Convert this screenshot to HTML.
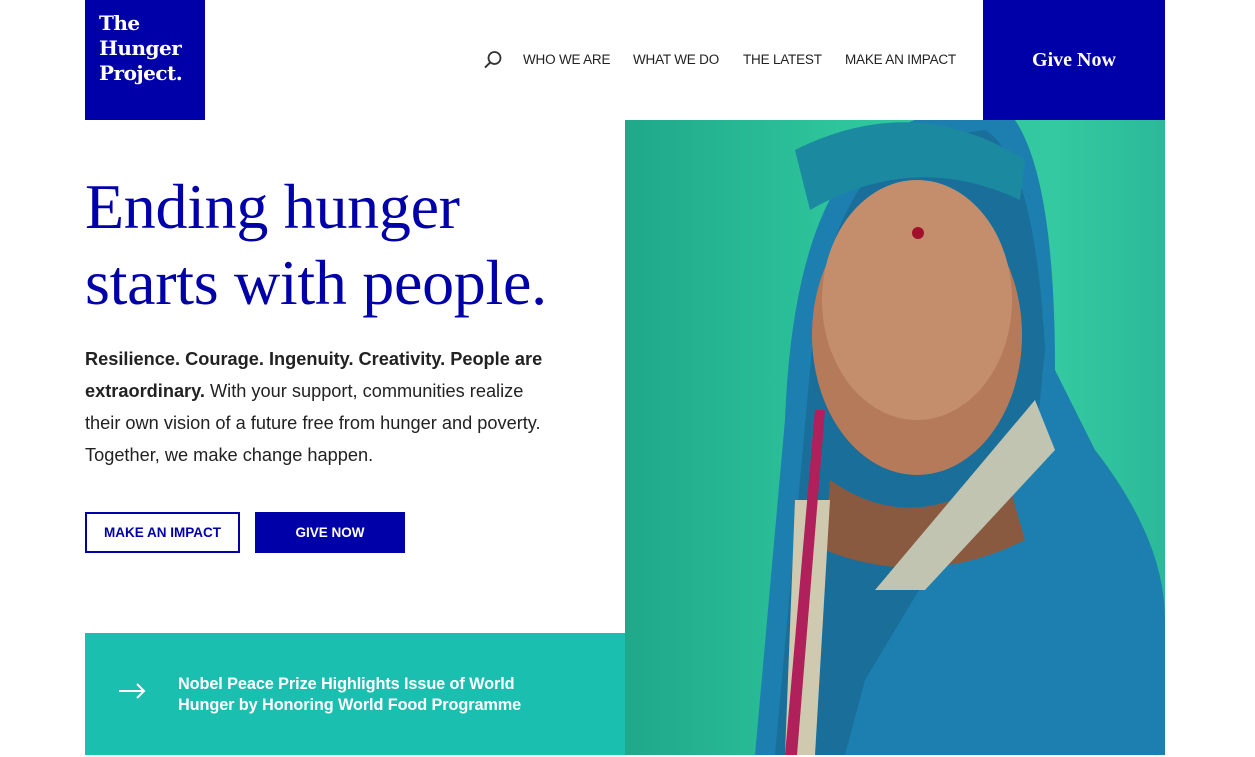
<!DOCTYPE html>
<html><head><meta charset="utf-8"><style>
*{margin:0;padding:0;box-sizing:border-box}
body{width:1255px;height:757px;background:#fff;position:relative;overflow:hidden;font-family:"Liberation Sans",sans-serif}
.logo{position:absolute;left:85px;top:0;width:120px;height:120px;background:#0000a8;color:#fff;font-family:"DejaVu Serif","Liberation Serif",serif;font-weight:bold;font-size:20px;line-height:25px;padding:11px 0 0 14px;letter-spacing:-0.5px}
.nav{position:absolute;top:52px;font-size:13.5px;color:#222;letter-spacing:-0.2px}
.give{position:absolute;left:983px;top:0;width:182px;height:120px;background:#0000a8;color:#fff;font-family:"Liberation Serif",serif;font-weight:bold;font-size:20px;text-align:center;line-height:121px}
h1{position:absolute;left:85px;top:169px;font-family:"Liberation Serif",serif;font-weight:normal;color:#0000a8;font-size:64px;line-height:76px;letter-spacing:-0.3px}
.p{position:absolute;left:85px;top:343px;width:520px;font-size:18.2px;line-height:32px;color:#222;white-space:nowrap}
.b1{position:absolute;left:85px;top:512px;width:155px;height:41px;border:2px solid #0000a8;color:#0000a8;font-weight:bold;font-size:13.5px;text-align:center;line-height:37px}
.b2{position:absolute;left:255px;top:512px;width:150px;height:41px;background:#0000a8;color:#fff;font-weight:bold;font-size:13.5px;text-align:center;line-height:41px}
.news{position:absolute;left:85px;top:633px;width:540px;height:122px;background:#1abfb0;color:#fff}
.news .t{position:absolute;left:93px;top:41px;font-size:16.3px;line-height:21px;font-weight:bold;letter-spacing:-0.1px}
.photo{position:absolute;left:625px;top:120px;width:540px;height:635px;overflow:hidden;background:linear-gradient(90deg,#1fa88a,#2ec59c 40%,#34c9a0 80%,#2bb99a)}
</style></head><body>
<div class="logo">The<br>Hunger<br>Project.</div>
<svg style="position:absolute;left:483px;top:50px" width="20" height="20" viewBox="0 0 20 20"><circle cx="11.5" cy="8" r="6" fill="none" stroke="#333" stroke-width="1.8"/><line x1="7.3" y1="12.3" x2="2" y2="17.6" stroke="#333" stroke-width="2"/></svg>
<div class="nav" style="left:523px">WHO WE ARE</div>
<div class="nav" style="left:633px">WHAT WE DO</div>
<div class="nav" style="left:743px">THE LATEST</div>
<div class="nav" style="left:845px">MAKE AN IMPACT</div>
<div class="give">Give Now</div>
<h1>Ending hunger<br>starts with people.</h1>
<div class="p"><b>Resilience. Courage. Ingenuity. Creativity. People are</b><br><b>extraordinary.</b> With your support, communities realize<br>their own vision of a future free from hunger and poverty.<br>Together, we make change happen.</div>
<div class="b1">MAKE AN IMPACT</div>
<div class="b2">GIVE NOW</div>
<div class="news"><svg style="position:absolute;left:33px;top:50px" width="28" height="16" viewBox="0 0 28 16"><path d="M1 8H26M19 1l7 7-7 7" fill="none" stroke="#fff" stroke-width="2"/></svg><div class="t">Nobel Peace Prize Highlights Issue of World<br>Hunger by Honoring World Food Programme</div></div>
<div class="photo">
<svg width="540" height="635" viewBox="0 0 540 635">
<path d="M130 635 L160 300 Q170 40 290 0 L390 0 Q430 60 430 250 L470 330 Q540 420 540 500 L540 635Z" fill="#1d7fb0"/>
<path d="M150 635 L185 250 Q200 60 290 20 L360 10 Q410 40 420 230 L410 330 L300 460 L240 560 L220 635Z" fill="#1a6e9a"/>
<ellipse cx="292" cy="215" rx="105" ry="140" fill="#b57a5a"/>
<ellipse cx="292" cy="180" rx="95" ry="120" fill="#c48e6c"/>
<path d="M205 360 Q290 420 380 350 L400 420 Q300 470 200 430Z" fill="#8a5a40"/>
<path d="M170 380 L160 635 L190 635 L205 380Z" fill="#cfc9b0"/>
<path d="M410 280 L430 330 L300 470 L250 470Z" fill="#c0c4b0"/>
<path d="M190 290 L160 635 L172 635 L200 290Z" fill="#b0205a"/>
<circle cx="293" cy="113" r="6" fill="#a0102a"/>
<path d="M170 30 Q290 -30 400 40 L395 80 Q290 30 185 90Z" fill="#1b8aa0"/>
</svg>
</div>
</body></html>
